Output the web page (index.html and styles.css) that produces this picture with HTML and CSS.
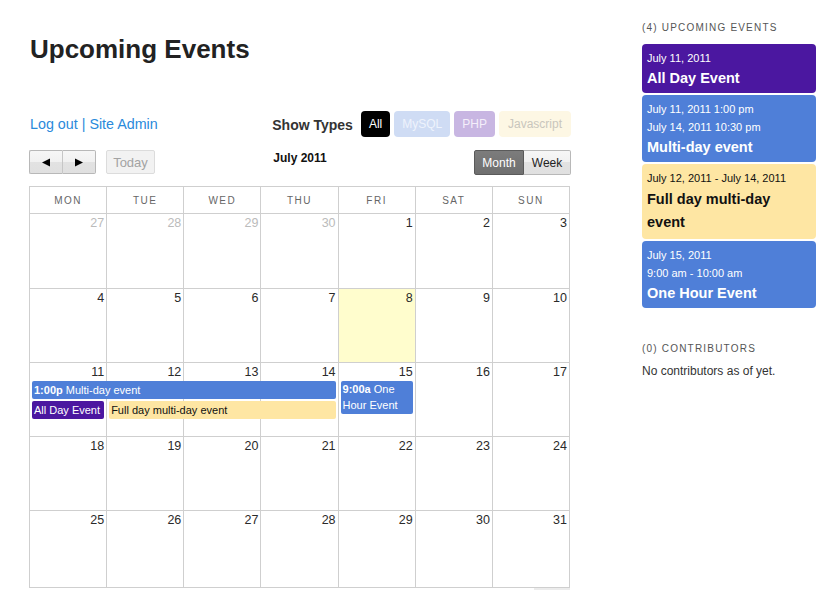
FILE: index.html
```html
<!DOCTYPE html>
<html>
<head>
<meta charset="utf-8">
<title>Upcoming Events</title>
<link rel="stylesheet" href="styles.css">
</head>
<body>
<div class="page">
  <div class="main">
    <h1 class="title">Upcoming Events</h1>

    <div class="toolbar">
      <div class="links"><a href="#">Log out</a> | <a href="#">Site Admin</a></div>
      <div class="types">
        <span class="types-label">Show Types</span>
        <span class="type type-all">All</span>
        <span class="type type-mysql">MySQL</span>
        <span class="type type-php">PHP</span>
        <span class="type type-js">Javascript</span>
      </div>
    </div>

    <div class="nav">
      <div class="nav-left">
        <div class="btn-group">
          <span class="btn btn-arrow"><svg width="10" height="9" viewBox="0 0 10 9"><path d="M9 0.5 L1 4.5 L9 8.5 Z" fill="#000"/></svg></span>
          <span class="btn btn-arrow"><svg width="10" height="9" viewBox="0 0 10 9"><path d="M1 0.5 L9 4.5 L1 8.5 Z" fill="#000"/></svg></span>
        </div>
        <span class="btn btn-today">Today</span>
      </div>
      <div class="nav-title">July 2011</div>
      <div class="nav-right">
        <div class="btn-group">
          <span class="btn btn-view active">Month</span>
          <span class="btn btn-view">Week</span>
        </div>
      </div>
    </div>

    <div class="calendar">
      <div class="cal-head">
        <div class="hcell">Mon</div><div class="hcell">Tue</div><div class="hcell">Wed</div><div class="hcell">Thu</div><div class="hcell">Fri</div><div class="hcell">Sat</div><div class="hcell">Sun</div>
      </div>

      <div class="week week-first">
        <div class="day other">27</div><div class="day other">28</div><div class="day other">29</div><div class="day other">30</div><div class="day">1</div><div class="day">2</div><div class="day">3</div>
      </div>
      <div class="week">
        <div class="day">4</div><div class="day">5</div><div class="day">6</div><div class="day">7</div><div class="day today">8</div><div class="day">9</div><div class="day">10</div>
      </div>
      <div class="week">
        <div class="day">11</div><div class="day">12</div><div class="day">13</div><div class="day">14</div><div class="day">15</div><div class="day">16</div><div class="day">17</div>
        <div class="ev ev-blue ev-multi"><b>1:00p</b> Multi-day event</div>
        <div class="ev ev-purple ev-allday">All Day Event</div>
        <div class="ev ev-yellow ev-fullday">Full day multi-day event</div>
        <div class="ev ev-blue ev-hour"><b>9:00a</b> One Hour Event</div>
      </div>
      <div class="week">
        <div class="day">18</div><div class="day">19</div><div class="day">20</div><div class="day">21</div><div class="day">22</div><div class="day">23</div><div class="day">24</div>
      </div>
      <div class="week week-last">
        <div class="day">25</div><div class="day">26</div><div class="day">27</div><div class="day">28</div><div class="day">29</div><div class="day">30</div><div class="day">31</div>
      </div>
    </div>
    <div class="cal-foot"></div>
  </div>

  <aside class="sidebar">
    <h2 class="side-head">(4) Upcoming Events</h2>
    <div class="cards">
      <div class="card card-purple">
        <div class="card-date">July 11, 2011</div>
        <div class="card-title">All Day Event</div>
      </div>
      <div class="card card-blue">
        <div class="card-date">July 11, 2011 1:00 pm</div>
        <div class="card-date">July 14, 2011 10:30 pm</div>
        <div class="card-title">Multi-day event</div>
      </div>
      <div class="card card-yellow">
        <div class="card-date">July 12, 2011 - July 14, 2011</div>
        <div class="card-title">Full day multi-day event</div>
      </div>
      <div class="card card-blue">
        <div class="card-date">July 15, 2011</div>
        <div class="card-date">9:00 am - 10:00 am</div>
        <div class="card-title">One Hour Event</div>
      </div>
    </div>

    <h2 class="side-head side-head-2">(0) Contributors</h2>
    <p class="side-text">No contributors as of yet.</p>
  </aside>
</div>
</body>
</html>
```

FILE: styles.css
```css
* { box-sizing: border-box; }

body {
  margin: 0;
  font-family: "Liberation Sans", Arial, sans-serif;
  color: #333;
  background: #fff;
}

.page {
  display: flex;
  align-items: flex-start;
}

.main {
  width: 542px;
  margin-left: 29px;
}

.title {
  margin: 34px 0 0 1px;
  font-size: 26px;
  line-height: 30px;
  font-weight: bold;
  color: #222;
}

.toolbar {
  display: flex;
  justify-content: space-between;
  align-items: center;
  margin-top: 47px;
  height: 26px;
}

.links {
  font-size: 14.3px;
  color: #2a8adb;
  padding-left: 1px;
}
.links a { color: #2a8adb; text-decoration: none; }

.types {
  display: flex;
  align-items: center;
  gap: 4px;
}

.types-label {
  font-size: 14px;
  font-weight: bold;
  color: #333;
  margin-right: 4px;
  padding-top: 2px;
}

.type {
  display: inline-flex;
  align-items: center;
  height: 26px;
  padding: 0 8px;
  border-radius: 4px;
  font-size: 12px;
}
.type-all { background: #000; color: #fff; }
.type-mysql { background: #cfdcf4; color: #eef3fc; }
.type-php { background: #c8b6e2; color: #f4effa; }
.type-js { background: #fdf7e4; color: #c9c6bd; padding: 0 9px; }

.nav {
  display: grid;
  grid-template-columns: 1fr auto 1fr;
  margin-top: 13px;
  height: 25px;
}

.nav-left {
  display: flex;
  align-items: flex-start;
  gap: 10px;
}

.nav-title {
  font-size: 12px;
  font-weight: bold;
  color: #111;
  line-height: 14px;
  padding-top: 1px;
}

.nav-right {
  display: flex;
  justify-content: flex-end;
}

.btn-group {
  display: flex;
}

.btn {
  display: inline-flex;
  align-items: center;
  justify-content: center;
  height: 24px;
  font-size: 12px;
  border: 1px solid #b8b8b8;
  background: linear-gradient(#f6f6f6 0%, #f1f1f1 50%, #e2e2e2 50%, #e0e0e0 100%);
  color: #222;
}

.btn-arrow {
  width: 34px;
}
.btn-group .btn-arrow:first-child { border-radius: 2px 0 0 2px; border-right: 1px solid #c6c6c6; }
.btn-group .btn-arrow:last-child { border-radius: 0 2px 2px 0; border-left: 0; width: 33px; }

.btn-today {
  width: 49px;
  border-color: #dcdcdc;
  background: #f2f2f2;
  color: #a3a3a3;
  font-size: 13px;
  border-radius: 2px;
}

.btn-view {
  height: 25px;
  width: 47px;
  font-size: 12px;
  border-left: 0;
  border-radius: 0 2px 2px 0;
}
.btn-view.active {
  width: 50px;
  border: 1px solid #5a5a5a;
  background: linear-gradient(#7c7c7c, #6f6f6f);
  color: #fff;
  border-radius: 2px 0 0 2px;
}

.calendar {
  width: 541px;
  margin-top: 11px;
  border-top: 1px solid #cfcfcf;
  border-left: 1px solid #cfcfcf;
}

.cal-head {
  display: grid;
  grid-template-columns: repeat(7, 1fr);
  height: 27px;
  border-bottom: 1px solid #cfcfcf;
}

.hcell {
  border-right: 1px solid #cfcfcf;
  text-align: center;
  font-size: 10px;
  letter-spacing: 1.5px;
  text-transform: uppercase;
  color: #666;
  line-height: 27px;
}

.week {
  display: grid;
  grid-template-columns: repeat(7, 1fr);
  grid-template-rows: 18px 19px 19px 1fr;
  height: 74px;
  border-bottom: 1px solid #cfcfcf;
}
.week-first { height: 75px; }
.week-last { height: 77px; }

.day {
  grid-row: 1 / -1;
  border-right: 1px solid #cfcfcf;
  text-align: right;
  font-size: 12.5px;
  line-height: 18px;
  padding-right: 2px;
  color: #2a2a2a;
}
.day.other { color: #bbb; }
.day.today { background: #fffdcd; }

.day:nth-child(1) { grid-column: 1; }
.day:nth-child(2) { grid-column: 2; }
.day:nth-child(3) { grid-column: 3; }
.day:nth-child(4) { grid-column: 4; }
.day:nth-child(5) { grid-column: 5; }
.day:nth-child(6) { grid-column: 6; }
.day:nth-child(7) { grid-column: 7; }

.ev {
  font-size: 11px;
  line-height: 18px;
  height: 18px;
  padding-left: 2px;
  border-radius: 2px;
  white-space: nowrap;
  overflow: hidden;
  margin: 0 3px 0 2px;
}
.ev b { font-weight: bold; }
.ev-blue { background: #4f7fd8; color: #fff; }
.ev-purple { background: #4b17a0; color: #fff; }
.ev-yellow { background: #fee6a3; color: #111; }

.ev-multi { grid-column: 1 / 5; grid-row: 2; }
.ev-allday { grid-column: 1; grid-row: 3; margin-top: 1px; }
.ev-fullday { grid-column: 2 / 5; grid-row: 3; margin-top: 1px; }
.ev-hour {
  grid-column: 5;
  grid-row: 2 / 4;
  height: 33px;
  white-space: normal;
  line-height: 16px;
  align-self: start;
}

.cal-foot {
  width: 36px;
  height: 3px;
  margin-left: 505px;
  background: #ececec;
}

.sidebar {
  width: 174px;
  margin-left: 71px;
}

.side-head {
  margin: 22px 0 0 0;
  font-size: 10px;
  line-height: 12px;
  font-weight: normal;
  letter-spacing: 1.2px;
  text-transform: uppercase;
  color: #555;
}

.cards {
  display: flex;
  flex-direction: column;
  gap: 2px;
  margin-top: 10px;
}

.card {
  border-radius: 4px;
  padding: 5px 8px 4px 5px;
  color: #fff;
}
.card-purple { background: #4b17a0; }
.card-blue { background: #4f7fd8; }
.card-yellow { background: #fee6a3; color: #111; padding-bottom: 5px; }

.card-date {
  font-size: 11px;
  line-height: 18px;
}

.card-title {
  font-size: 14.5px;
  font-weight: bold;
  line-height: 22px;
}

.card-yellow .card-title { line-height: 23px; padding-top: 1px; }

.side-head-2 {
  margin-top: 35px;
}

.side-text {
  margin: 9px 0 0 0;
  font-size: 12px;
  line-height: 14px;
  color: #333;
}
```
